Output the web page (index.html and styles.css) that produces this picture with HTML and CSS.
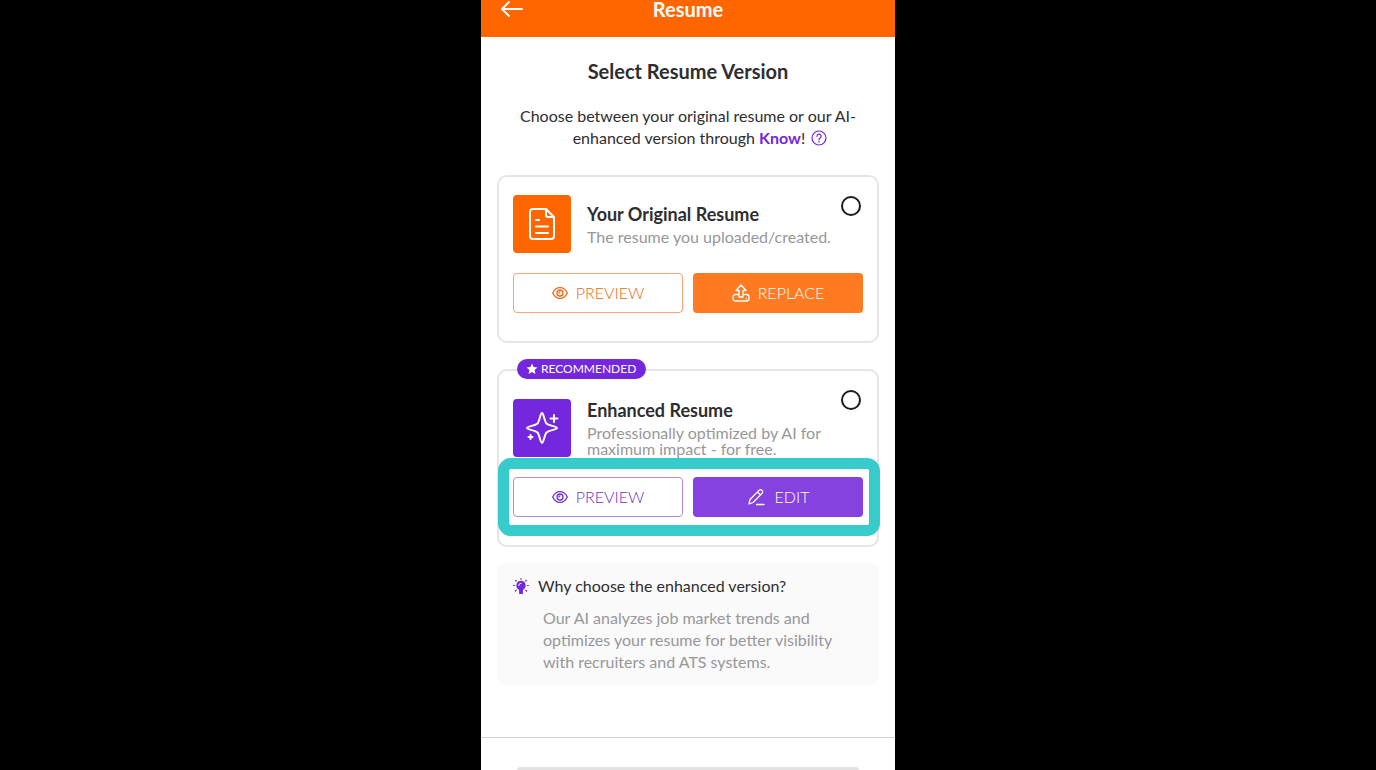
FILE: index.html
```html
<!doctype html>
<html lang="en">
    <head>
        <meta charset="UTF-8" />
        <meta name="viewport" content="width=device-width, initial-scale=1.0" />
        <title>Resume</title>
        <link rel="stylesheet" href="styles.css">
    </head>
    <body>
        <div class="screen">
            <header class="topbar">
                <button class="back" aria-label="Back">
                    <svg width="24" height="18" viewBox="0 0 24 18"><path d="M22 9H2M9 2 2 9l7 7" /></svg>
                </button>
                <h1>Resume</h1>
            </header>

            <main class="content">
                <h2>Select Resume Version</h2>
                <p class="intro">
                    Choose between your original resume or our AI-<br />
                    <span class="intro-end">enhanced version through <strong>Know</strong>!
                    <button class="help" aria-label="Help">
                        <svg width="16" height="16" viewBox="0 0 16 16"><circle cx="8" cy="8" r="7" /><path d="M5.900 6.300a2.100 2.100 0 1 1 3.100 1.800c-.7.400-1 .8-1 1.500M8 11.200v.9" /></svg>
                    </button></span>
                </p>

                <section class="card original">
                    <input type="radio" name="version" id="original" />
                    <div class="card-head">
                        <div class="tile">
                            <svg width="28" height="34" viewBox="0 0 28 34"><path d="M18 2H5a3 3 0 0 0-3 3v24a3 3 0 0 0 3 3h18a3 3 0 0 0 3-3V10zv6a2 2 0 0 0 2 2h6M8 13h3M8 19.500h12M8 26h12" /></svg>
                        </div>
                        <label for="original">
                            <span class="name">Your Original Resume</span>
                            <span class="desc">The resume you uploaded/created.</span>
                        </label>
                    </div>
                    <div class="actions">
                        <button class="btn outline">
                            <svg width="16" height="16" viewBox="0 0 16 16"><path d="M.7 8C2.300 4.600 5 2.600 8 2.600s5.700 2 7.300 5.400C13.700 11.400 11 13.400 8 13.400S2.300 11.400.7 8z" /><circle cx="8" cy="8" r="3" /><path d="M6.900 8A1.100 1.100 0 0 1 8 6.900" /></svg>
                            PREVIEW
                        </button>
                        <button class="btn solid">
                            <svg width="18" height="20" viewBox="0 0 18 20"><path d="M7 14V7.500H4L9 2l5 5.500h-3V14zM7 11.500H3.500a2.500 2.500 0 0 0-2.500 2.500v1.500A2.500 2.500 0 0 0 3.500 18h11a2.500 2.500 0 0 0 2.500-2.500V14a2.500 2.500 0 0 0-2.500-2.500H11M14 15.500h.3" /></svg>
                            REPLACE
                        </button>
                    </div>
                </section>

                <section class="card enhanced">
                    <span class="badge">
                        <svg width="12" height="12" viewBox="0 0 12 12"><path d="m6 .5 1.600 3.600 3.900.4-2.900 2.600.8 3.900L6 9l-3.400 2 .8-3.900L.5 4.500l3.900-.4z" /></svg>
                        RECOMMENDED
                    </span>
                    <input type="radio" name="version" id="enhanced" />
                    <div class="card-head">
                        <div class="tile">
                            <svg width="34" height="34" viewBox="0 0 34 34"><path d="M17 2c1.600 0 2.500 8.500 4.500 10.500S32 15.400 32 17s-8.500 2.500-10.500 4.500S18.600 32 17 32s-2.500-8.500-4.500-10.500S2 18.600 2 17s8.500-2.500 10.500-4.500S15.400 2 17 2z" /><path d="M29 4v7M25.500 7.500h7M5.500 24v4M3.500 26h4" /></svg>
                        </div>
                        <label for="enhanced">
                            <span class="name">Enhanced Resume</span>
                            <span class="desc">Professionally optimized by AI for maximum impact - for free.</span>
                        </label>
                    </div>
                    <div class="actions">
                        <button class="btn outline">
                            <svg width="16" height="16" viewBox="0 0 16 16"><path d="M.7 8C2.300 4.600 5 2.600 8 2.600s5.700 2 7.300 5.400C13.700 11.400 11 13.400 8 13.400S2.300 11.400.7 8z" /><circle cx="8" cy="8" r="3" /><path d="M6.900 8A1.100 1.100 0 0 1 8 6.900" /></svg>
                            PREVIEW
                        </button>
                        <button class="btn solid pen">
                            <svg width="18" height="18" viewBox="0 0 18 18"><path d="m2 16 1-4.500L12 2.400a2.100 2.100 0 0 1 3 0 2.100 2.100 0 0 1 0 3L6 14.500zM10.500 4l3 3M9.500 16.500H17" /></svg>
                            EDIT
                        </button>
                    </div>
                    <div class="spotlight"></div>
                </section>

                <section class="tip">
                    <h3>
                        <svg width="16" height="16" viewBox="0 0 16 16"><path class="bulb" d="M8 2.800a4.700 4.700 0 0 0-2.700 8.500c.6.500.8 1 .8 1.800V16h3.800v-2.900c0-.8.2-1.300.8-1.800A4.700 4.700 0 0 0 8 2.800z" /><path class="rays" d="M8 .6v.6M2.600 2.300l.7.700M13.400 2.300l-.7.700M.6 7.500h1M14.400 7.500h1M2.300 13l.9-.9M13.700 13l-.9-.9" /><path class="shine" d="M5.700 7.500A2.300 2.300 0 0 1 8 5.200" /></svg>
                        Why choose the enhanced version?
                    </h3>
                    <p>Our AI analyzes job market trends and optimizes your resume for better visibility with recruiters and ATS systems.</p>
                </section>
            </main>

            <footer class="footer">
                <button class="next" aria-label="Continue" disabled></button>
            </footer>
        </div>
    </body>
</html>
```
FILE: styles.css
```css
* {
    box-sizing: border-box;
}
body {
    margin: 0;
    background: #000;
    color: #2e2e30;
    font-family: Lato, "Open Sans", sans-serif;
    font-size: 16px;
    line-height: 22px;
}
h1,
h2,
h3,
p {
    margin: 0;
}
button {
    font: inherit;
    padding: 0;
    border: 0;
    background: none;
    cursor: pointer;
}
svg {
    flex: none;
    fill: none;
    stroke: currentColor;
    stroke-linecap: round;
    stroke-linejoin: round;
}
.screen {
    display: flex;
    flex-direction: column;
    max-width: 414px;
    height: 100vh;
    margin: 0 auto;
    overflow: hidden;
    background: #fff;
}

/* top bar */
.topbar {
    display: grid;
    grid-template-columns: 24px 1fr 24px;
    align-items: center;
    padding: 0 19px 19px;
    background: #ff6600;
    color: #fff;
}
.topbar h1 {
    font-size: 20px;
    line-height: 18px;
    text-align: center;
}
.back {
    display: flex;
    color: #fff;
}
.back svg {
    stroke-width: 2;
}

.content {
    flex: 1 0 auto;
    padding: 22px 16px 52px;
}
h2 {
    font-size: 20px;
    line-height: 24px;
    text-align: center;
}
.intro {
    margin: 22px 0 26px;
    text-align: center;
}
.intro-end {
    padding-left: 24px;
}
.intro strong {
    color: #7427dc;
}
.help {
    margin-left: 2px;
    color: #7427dc;
    vertical-align: -2px;
}
.help svg {
    display: block;
    stroke-width: 1.2;
}

/* resume cards */
.card {
    position: relative;
    padding: 18px 14px 28px;
    border: 2px solid #e5e5e7;
    border-radius: 10px;
}
.original {
    --main: #ff6600;
    --soft: #ff7a21;
    --line: #f9a474;
    --ink: #e96a18;
}
.enhanced {
    --main: #7427dc;
    --soft: #8642e0;
    --line: #b48ae6;
    --ink: #7032c8;
    margin-top: 26px;
    padding-top: 28px;
}
.card input {
    position: absolute;
    top: 19px;
    right: 16px;
    width: 20px;
    height: 20px;
    margin: 0;
    border: 2px solid #1c1c1e;
    border-radius: 50%;
    appearance: none;
}
.card input:checked {
    background: var(--main);
}
.card-head {
    display: flex;
    align-items: center;
    gap: 16px;
}
.tile {
    display: flex;
    flex: none;
    align-items: center;
    justify-content: center;
    width: 58px;
    height: 58px;
    border-radius: 4px;
    background: var(--main);
    color: #fff;
}
.tile svg {
    stroke-width: 2;
}
.card label {
    flex: 1;
    padding-right: 30px;
}
.name,
.desc {
    display: block;
}
.name {
    margin-bottom: 4px;
    font-size: 18px;
    font-weight: bold;
}
.desc {
    color: #97979a;
    line-height: 16px;
}
.actions {
    display: grid;
    grid-template-columns: 1fr 1fr;
    gap: 10px;
    margin-top: 20px;
}
.btn {
    display: flex;
    align-items: center;
    justify-content: center;
    gap: 8px;
    height: 40px;
    border-radius: 4px;
    font-weight: 300;
}
.btn svg {
    stroke-width: 1.3;
}
.pen {
    gap: 10px;
}
.outline {
    border: 1px solid var(--line);
    color: var(--ink);
}
.solid {
    background: var(--soft);
    color: #fff;
}
.badge {
    position: absolute;
    top: -12px;
    left: 18px;
    display: flex;
    align-items: center;
    gap: 3px;
    padding: 0 10px 0 9px;
    border-radius: 10px;
    background: #7427dc;
    color: #fff;
    font-size: 12px;
    line-height: 20px;
}
.badge svg {
    fill: currentColor;
    stroke: none;
}

/* ring around the enhanced actions */
.spotlight {
    position: absolute;
    right: -3px;
    bottom: 9px;
    left: -1px;
    height: 78px;
    border: 11px solid #38cbcb;
    border-radius: 13px;
    pointer-events: none;
}

.tip {
    margin-top: 16px;
    padding: 12px 16px;
    border-radius: 8px;
    background: #fafafa;
}
.tip h3 {
    display: flex;
    align-items: center;
    gap: 9px;
    font-size: 16px;
    font-weight: normal;
}
.tip svg {
    color: #7427dc;
}
.bulb {
    fill: currentColor;
    stroke: none;
}
.rays {
    stroke-width: 1.2;
}
.shine {
    stroke: #fff;
}
.tip p {
    margin-top: 10px;
    padding: 0 30px;
    color: #97979a;
}

.footer {
    flex: none;
    padding: 29px 36px 20px;
    border-top: 1px solid #d4d4d6;
}
.next {
    display: block;
    width: 100%;
    height: 48px;
    border-radius: 4px;
    background: #e2e2e2;
}
```
